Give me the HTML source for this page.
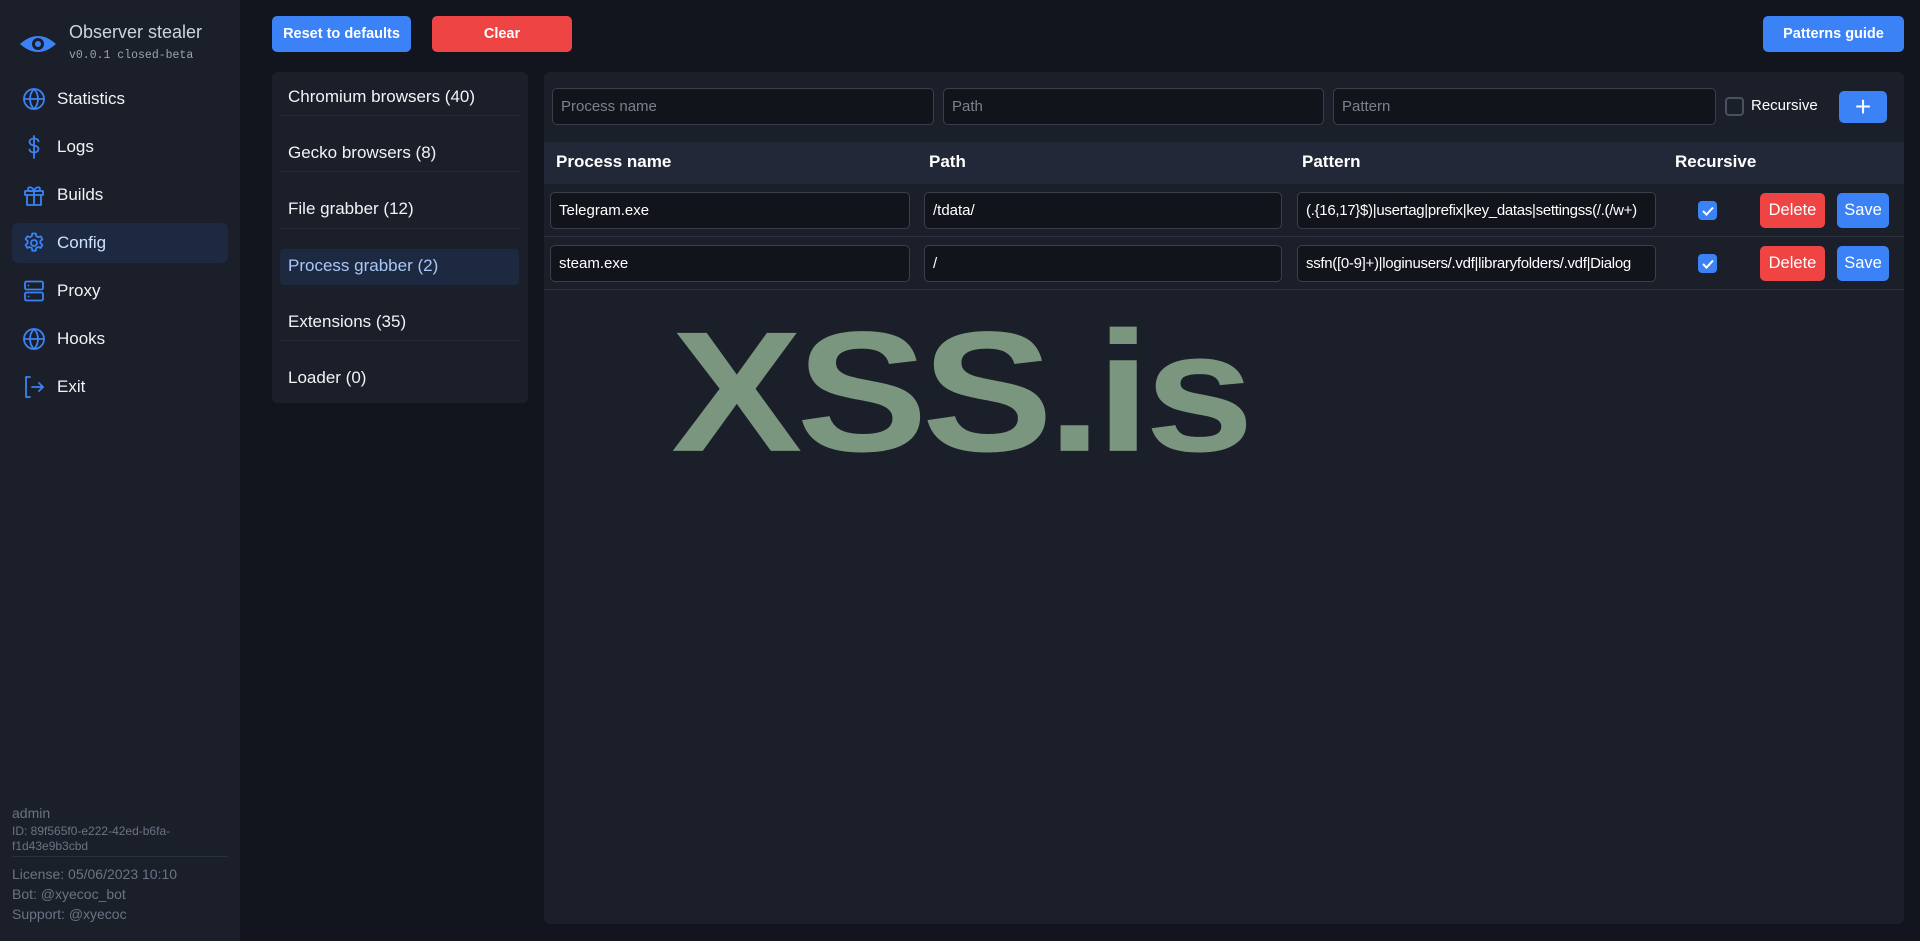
<!DOCTYPE html>
<html><head><meta charset="utf-8"><style>
*{box-sizing:border-box;margin:0;padding:0}
body{width:1920px;height:941px;background:#12151d;font-family:"Liberation Sans",sans-serif;color:#fff;position:relative;overflow:hidden}
.abs{position:absolute}
.sb{left:0;top:0;width:240px;height:941px;background:#1b1f29}
.nav{left:12px;width:216px;height:40px;display:flex;align-items:center;padding-left:10px;font-size:17px;color:#f1f3f6;border-radius:6px}
.nav svg{width:24px;height:24px;margin-right:11px;fill:none;stroke:#3b82f6;stroke-width:1.8;stroke-linecap:round;stroke-linejoin:round}
.btn{border-radius:5px;font-weight:bold;font-size:14.5px;display:flex;align-items:center;justify-content:center;color:#fff}
.blue{background:#3b82f6}.red{background:#ef4444}
.li{left:288px;font-size:17px;color:#f1f3f6}
.sep{height:1px;background:#262b37}
.inp{height:37px;border:1px solid #3a3f4b;border-radius:5px;background:#11141b;font-size:15px;display:flex;align-items:center;padding-left:8px;color:#fff;overflow:hidden;white-space:nowrap}
.ph{color:#7b808b}
.th{top:152px;font-size:17px;font-weight:bold}
.cb{width:19px;height:19px;border-radius:4px;background:#3b82f6;display:flex;align-items:center;justify-content:center}
.sm{border-radius:5px;font-size:16.5px;display:flex;align-items:center;justify-content:center;color:#fff}
.bot{left:12px;color:#6b7384;font-size:14px}
</style></head><body>
<div class="abs sb"></div>
<svg class="abs" style="left:19px;top:32px" width="38" height="24" viewBox="0 0 38 24"><path d="M1 12 Q19 -4 37 12 Q19 28 1 12 Z" fill="#3b82f6"/><circle cx="19" cy="12" r="6" fill="#1b1f29"/><circle cx="19" cy="12" r="3" fill="#3b82f6"/></svg>
<div class="abs" style="left:69px;top:22px;font-size:18px;color:#cbd5e1">Observer stealer</div>
<div class="abs" style="left:69px;top:49px;font-size:11.5px;font-family:'Liberation Mono',monospace;color:#9aa3b2">v0.0.1 closed-beta</div>

<div class="abs nav" style="top:79px"><svg viewBox="0 0 24 24"><circle cx="12" cy="12" r="10"/><path d="M2 12h20M12 2c3 3 4 6.5 4 10s-1 7-4 10c-3-3-4-6.5-4-10s1-7 4-10z"/></svg>Statistics</div>
<div class="abs nav" style="top:127px"><svg viewBox="0 0 24 24"><path d="M12 1v22M16.5 6.5c0-1.8-2-3-4.5-3s-4.5 1.3-4.5 3.5 2 3 4.5 3.5 4.5 1.5 4.5 3.5-2 3.5-4.5 3.5-4.5-1.3-4.5-3"/></svg>Logs</div>
<div class="abs nav" style="top:175px"><svg viewBox="0 0 24 24"><rect x="3" y="8" width="18" height="4"/><path d="M5 12v10h14V12M12 8v14M12 8c-1-4-6-5-6-2s6 2 6 2c1-4 6-5 6-2s-6 2-6 2"/></svg>Builds</div>
<div class="abs nav" style="top:223px;background:#1c2940"><svg viewBox="0 0 24 24"><circle cx="12" cy="12" r="3"/><path d="M10.3 2.5h3.4l.5 2.6 2 1.1 2.5-.9 1.7 2.9-2 1.8v2.2l2 1.8-1.7 2.9-2.5-.9-2 1.1-.5 2.6h-3.4l-.5-2.6-2-1.1-2.5.9-1.7-2.9 2-1.8v-2.2l-2-1.8 1.7-2.9 2.5.9 2-1.1z"/></svg><span style="color:#cfe0ff">Config</span></div>
<div class="abs nav" style="top:271px"><svg viewBox="0 0 24 24"><rect x="3" y="2.5" width="18" height="8" rx="1.5"/><rect x="3" y="13.5" width="18" height="8" rx="1.5"/><path d="M6.5 6.5h.01M6.5 17.5h.01"/></svg>Proxy</div>
<div class="abs nav" style="top:319px"><svg viewBox="0 0 24 24"><circle cx="12" cy="12" r="10"/><path d="M2 12h20M12 2c3 3 4 6.5 4 10s-1 7-4 10c-3-3-4-6.5-4-10s1-7 4-10z"/></svg>Hooks</div>
<div class="abs nav" style="top:367px"><svg viewBox="0 0 24 24"><path d="M8 2H4v20h4M10 12h11M17 8l4 4-4 4"/></svg>Exit</div>

<div class="abs bot" style="top:805px">admin</div>
<div class="abs bot" style="top:824px;font-size:12px;line-height:15px">ID: 89f565f0-e222-42ed-b6fa-<br>f1d43e9b3cbd</div>
<div class="abs" style="left:12px;top:856px;width:216px;height:1px;background:#2a303c"></div>
<div class="abs bot" style="top:866px">License: 05/06/2023 10:10</div>
<div class="abs bot" style="top:886px">Bot: @xyecoc_bot</div>
<div class="abs bot" style="top:906px">Support: @xyecoc</div>

<div class="abs btn blue" style="left:272px;top:16px;width:139px;height:36px">Reset to defaults</div>
<div class="abs btn red" style="left:432px;top:16px;width:140px;height:36px">Clear</div>
<div class="abs btn blue" style="left:1763px;top:16px;width:141px;height:36px">Patterns guide</div>

<div class="abs" style="left:272px;top:72px;width:256px;height:331px;background:#1b1f29;border-radius:6px"></div>
<div class="abs li" style="top:87px">Chromium browsers (40)</div>
<div class="abs sep" style="left:280px;top:115px;width:239px"></div>
<div class="abs li" style="top:143px">Gecko browsers (8)</div>
<div class="abs sep" style="left:280px;top:171px;width:239px"></div>
<div class="abs li" style="top:199px">File grabber (12)</div>
<div class="abs sep" style="left:280px;top:228px;width:239px"></div>
<div class="abs" style="left:280px;top:249px;width:239px;height:36px;background:#1c2940;border-radius:4px"></div>
<div class="abs li" style="top:256px;color:#a9c7f5">Process grabber (2)</div>
<div class="abs li" style="top:312px">Extensions (35)</div>
<div class="abs sep" style="left:280px;top:340px;width:239px"></div>
<div class="abs li" style="top:368px">Loader (0)</div>

<div class="abs" style="left:544px;top:72px;width:1360px;height:852px;background:#1b1f29;border-radius:6px"></div>
<div class="abs inp" style="left:552px;top:88px;width:382px"><span class="ph">Process name</span></div>
<div class="abs inp" style="left:943px;top:88px;width:381px"><span class="ph">Path</span></div>
<div class="abs inp" style="left:1333px;top:88px;width:383px"><span class="ph">Pattern</span></div>
<div class="abs" style="left:1725px;top:97px;width:19px;height:19px;border:2px solid #4b5060;border-radius:4px"></div>
<div class="abs" style="left:1751px;top:97px;font-size:15px">Recursive</div>
<div class="abs btn blue" style="left:1839px;top:91px;width:48px;height:32px;font-size:28px;font-weight:normal">+</div>

<div class="abs" style="left:544px;top:142px;width:1360px;height:42px;background:#232838"></div>
<div class="abs th" style="left:556px">Process name</div>
<div class="abs th" style="left:929px">Path</div>
<div class="abs th" style="left:1302px">Pattern</div>
<div class="abs th" style="left:1675px">Recursive</div>

<div class="abs sep" style="left:544px;top:236px;width:1360px;background:#2a2f3b"></div>
<div class="abs sep" style="left:544px;top:289px;width:1360px;background:#2a2f3b"></div>

<div class="abs inp" style="left:550px;top:192px;width:360px">Telegram.exe</div>
<div class="abs inp" style="left:924px;top:192px;width:358px">/tdata/</div>
<div class="abs inp" style="left:1297px;top:192px;width:359px;letter-spacing:-0.3px">(.{16,17}$)|usertag|prefix|key_datas|settingss(/.(/w+)</div>
<div class="abs cb" style="left:1698px;top:201px"><svg width="12" height="10" viewBox="0 0 12 10"><path d="M1 5l3.5 3.5L11 1.5" stroke="#fff" stroke-width="2" fill="none"/></svg></div>
<div class="abs sm red" style="left:1760px;top:193px;width:65px;height:35px">Delete</div>
<div class="abs sm blue" style="left:1837px;top:193px;width:52px;height:35px">Save</div>

<div class="abs inp" style="left:550px;top:245px;width:360px">steam.exe</div>
<div class="abs inp" style="left:924px;top:245px;width:358px">/</div>
<div class="abs inp" style="left:1297px;top:245px;width:359px;letter-spacing:-0.3px">ssfn([0-9]+)|loginusers/.vdf|libraryfolders/.vdf|Dialog</div>
<div class="abs cb" style="left:1698px;top:254px"><svg width="12" height="10" viewBox="0 0 12 10"><path d="M1 5l3.5 3.5L11 1.5" stroke="#fff" stroke-width="2" fill="none"/></svg></div>
<div class="abs sm red" style="left:1760px;top:246px;width:65px;height:35px">Delete</div>
<div class="abs sm blue" style="left:1837px;top:246px;width:52px;height:35px">Save</div>

<div class="abs" style="left:671px;top:283px;font-size:197px;font-weight:bold;color:#7a967f;letter-spacing:-6px;line-height:1;transform:scaleY(0.87);transform-origin:0 180px">XSS.is</div>
</body></html>
